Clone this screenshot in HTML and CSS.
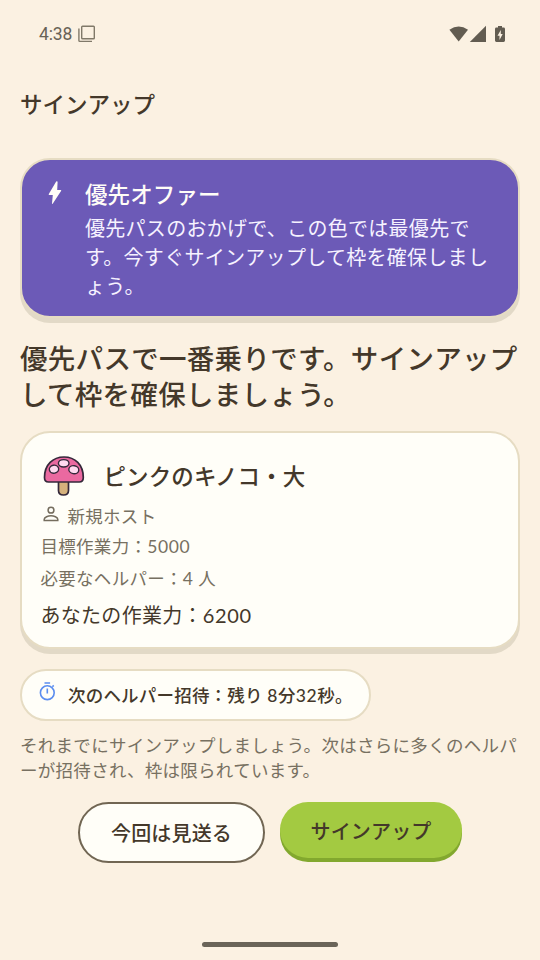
FILE: index.html
```html
<!DOCTYPE html>
<html lang="ja">
<head>
<meta charset="utf-8">
<meta name="viewport" content="width=device-width, initial-scale=1">
<title>サインアップ</title>
<link rel="stylesheet" href="styles.css">
</head>
<body>
<div class="screen">
  <header class="status">
    <div class="status-left">
      <span class="clock">4:38</span>
      <svg class="windows-icon" width="18" height="18" viewBox="0 0 18 18" fill="none" stroke="#807969" stroke-width="1.4"><rect x="3.700" y="1.2" width="12.6" height="12.6" rx=".8"/><path d="M.9 3.500V15.500Q.9 16.400 1.800 16.400H14"/></svg>
    </div>
    <svg width="58" height="18" viewBox="0 0 58 18" fill="#625c51"><path d="M.4 4.7Q9.700-1.700 19 4.700L9.700 16.600Z"/><path d="M37 .8V17H20.800Z"/><path fill-rule="evenodd" d="M49 1h4v1.600h1.600q1.400 0 1.400 1.400v11.600q0 1.400-1.400 1.400h-7.200q-1.400 0-1.400-1.400V4q0-1.400 1.400-1.400H49ZM51.800 5l-3.300 5.700h2v4.200l3.200-5.800h-1.900Z"/></svg>
  </header>
  <h1 class="page-title">サインアップ</h1>
  <main class="content">
    <section class="card offer">
      <svg class="bolt" width="14" height="24" viewBox="0 0 14 24" fill="#fffdf7"><path d="M8.200.5.800 13q-.4.900.4.900h3.600L4 22.500q0 .7.700.3L13.200 9.800q.3-.8-.4-.8H9.200L9.600.8Q9.200-.1 8.200.5Z"/></svg>
      <div class="offer-text">
        <h2 class="offer-title">優先オファー</h2>
        <p class="offer-body">優先パスのおかげで、この色では最優先で<br>す。今すぐサインアップして枠を確保しまし<br>ょう。</p>
      </div>
    </section>
    <h2 class="headline">優先パスで一番乗りです。サインアップ<br>して枠を確保しましょう。</h2>
    <section class="card details">
      <div class="mushroom-row">
        <svg width="42" height="42" viewBox="0 0 42 42" stroke="#35283a" stroke-width="1.700" stroke-linejoin="round"><path fill="#d5b17c" d="M15.500 26h10v9.500q0 4.500-5 4.500t-5-4.500Z"/><path fill="#ea69a0" d="M1.500 22.500C1.500 9.500 10 2 21 2s19.300 7.500 19.300 20.500q0 4.500-4 4.500H5.500q-4 0-4-4.500Z"/><g fill="#ffd9ef" stroke-width="1.400"><ellipse cx="11" cy="14.200" rx="4.700" ry="4" transform="rotate(-12 11 14.200)"/><ellipse cx="20.700" cy="8.300" rx="5.300" ry="3.700"/><ellipse cx="30.800" cy="14.700" rx="5" ry="4" transform="rotate(10 30.800 14.700)"/></g></svg>
        <h3 class="mushroom-name">ピンクのキノコ・大</h3>
      </div>
      <div class="host">
        <svg width="16" height="16" viewBox="0 0 16 16" fill="none" stroke="#756d5e" stroke-width="1.500"><circle cx="8" cy="4.200" r="2.900"/><path d="M1.200 14.600v-1.300c0-2.200 4-3.500 6.800-3.500s6.800 1.300 6.800 3.500v1.300Z"/></svg>
        <span>新規ホスト</span>
      </div>
      <p class="meta">目標作業力：<span class="num">5000</span></p>
      <p class="meta helpers">必要なヘルパー：<span class="num">4</span> 人</p>
      <p class="power">あなたの作業力：<span class="num">6200</span></p>
    </section>
    <div class="timer">
      <svg class="timer-icon" width="17" height="19" viewBox="0 0 17 19" fill="none" stroke="#5b8def" stroke-width="1.600"><path d="M5.500 1h5.600M8.300 6.500v5M13.400 4.700l1.300-1.300"/><circle cx="8.300" cy="10.700" r="6.900"/></svg>
      <span class="timer-text">次のヘルパー招待：残り <span class="num">8</span>分<span class="num">32</span>秒。</span>
    </div>
    <p class="note">それまでにサインアップしましょう。次はさらに多くのヘルパ<br>ーが招待され、枠は限られています。</p>
    <div class="actions">
      <button class="button skip">今回は見送る</button>
      <button class="button signup">サインアップ</button>
    </div>
  </main>
  <footer class="home"><div class="home-bar"></div></footer>
</div>
</body>
</html>
```
FILE: styles.css
```css
* { box-sizing: border-box; }

body {
  margin: 0;
  background: #fbf1e2;
  color: #44382a;
  font-family: Lato, "Noto Sans CJK JP", sans-serif;
  font-size: 17.5px;
  letter-spacing: .29px;
}

h1, h2, h3, p { margin: 0; font-weight: 500; white-space: nowrap; }
p { font-weight: 400; }
svg { display: block; flex: none; }
.num { letter-spacing: .6px; }

.screen {
  width: 540px;
  height: 960px;
  display: flex;
  flex-direction: column;
  overflow: hidden;
}

.status {
  height: 68px;
  padding: 0 33px 0 39px;
  display: flex;
  align-items: center;
  justify-content: space-between;
}

.status-left { display: flex; align-items: center; gap: 6px; }
.clock { font: 400 17.5px/20px Roboto, sans-serif; letter-spacing: -.1px; color: #686256; }

.page-title {
  height: 90px;
  padding: 19px 20px 0;
  font-size: 22.5px;
  line-height: 36px;
  letter-spacing: 0;
}

.content { flex: 1; padding: 0 20px; }

.card {
  border: 2.5px solid #e6dcc3;
  border-radius: 30px;
  box-shadow: 0 5px 0 #e2d9c7;
}

.offer {
  height: 160px;
  padding: 17px 22px 0 26px;
  display: flex;
  gap: 23px;
  background: #6c5ab7;
  color: #fffdf7;
}

.bolt { margin-top: 4px; }
.offer-title { font-size: 22.5px; line-height: 36px; letter-spacing: .1px; }
.offer-body { font-size: 20px; line-height: 29px; margin-top: 1px; color: #f6f2ff; }

.headline {
  margin-top: 22px;
  padding-top: 1px;
  font-size: 27.5px;
  line-height: 36px;
  letter-spacing: .3px;
}

.details {
  height: 218px;
  margin-top: 18px;
  padding: 21px 18px 0 18.5px;
  background: #fffef8;
}

.mushroom-row { display: flex; align-items: center; gap: 19px; padding-left: 2px; height: 44px; }
.mushroom-name { font-size: 22.5px; line-height: 36px; letter-spacing: .1px; padding-top: 2px; }

.host {
  height: 26px;
  margin-top: 4px;
  padding-left: 2px;
  display: flex;
  align-items: center;
  gap: 9px;
  color: #777061;
}

.host svg { margin-bottom: 3px; }
.meta { line-height: 26px; margin-top: 6px; color: #777061; }
.helpers { margin-top: 6px; }
.power { font-size: 20px; line-height: 30px; margin-top: 8px; }

.timer {
  width: 351px;
  height: 52px;
  margin-top: 20px;
  padding-left: 17px;
  display: flex;
  align-items: center;
  gap: 12px;
  border: 2.5px solid #e6dcc3;
  border-radius: 26px;
  background: #fffef8;
  font-weight: 500;
  white-space: nowrap;
}

.timer-icon { margin-bottom: 7px; }
.timer-text { margin-bottom: 2px; letter-spacing: .2px; }
.note { margin-top: 12px; line-height: 25px; color: #777061; }

.actions {
  display: flex;
  justify-content: center;
  gap: 15px;
  margin-top: 19px;
}

.button {
  border: 0;
  border-radius: 31px;
  padding: 0;
  color: #44382a;
  font: 500 20px/30px Lato, "Noto Sans CJK JP", sans-serif;
  letter-spacing: .15px;
}

.skip { width: 187px; height: 61px; padding-top: 1px; border: 2.5px solid #716653; background: #fffef8; }
.signup { width: 182px; height: 56px; padding-top: 1px; background: #a3ca41; box-shadow: 0 4px 0 #82a82e; }

.home { height: 18px; display: flex; justify-content: center; }
.home-bar { width: 136px; height: 5px; border-radius: 3px; background: #6a6458; }
```
